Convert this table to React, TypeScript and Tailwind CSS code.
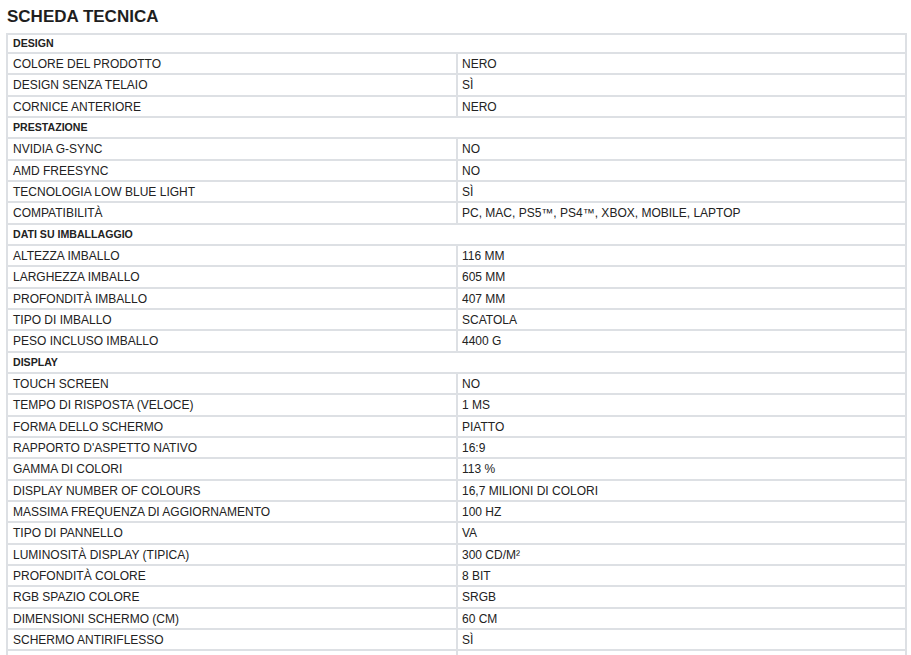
import React from "react";

type Row = { label: string; value?: string };

const rows: Row[] = [
  { label: "DESIGN" },
  { label: "COLORE DEL PRODOTTO", value: "NERO" },
  { label: "DESIGN SENZA TELAIO", value: "SÌ" },
  { label: "CORNICE ANTERIORE", value: "NERO" },
  { label: "PRESTAZIONE" },
  { label: "NVIDIA G-SYNC", value: "NO" },
  { label: "AMD FREESYNC", value: "NO" },
  { label: "TECNOLOGIA LOW BLUE LIGHT", value: "SÌ" },
  { label: "COMPATIBILITÀ", value: "PC, MAC, PS5™, PS4™, XBOX, MOBILE, LAPTOP" },
  { label: "DATI SU IMBALLAGGIO" },
  { label: "ALTEZZA IMBALLO", value: "116 MM" },
  { label: "LARGHEZZA IMBALLO", value: "605 MM" },
  { label: "PROFONDITÀ IMBALLO", value: "407 MM" },
  { label: "TIPO DI IMBALLO", value: "SCATOLA" },
  { label: "PESO INCLUSO IMBALLO", value: "4400 G" },
  { label: "DISPLAY" },
  { label: "TOUCH SCREEN", value: "NO" },
  { label: "TEMPO DI RISPOSTA (VELOCE)", value: "1 MS" },
  { label: "FORMA DELLO SCHERMO", value: "PIATTO" },
  { label: "RAPPORTO D'ASPETTO NATIVO", value: "16:9" },
  { label: "GAMMA DI COLORI", value: "113 %" },
  { label: "DISPLAY NUMBER OF COLOURS", value: "16,7 MILIONI DI COLORI" },
  { label: "MASSIMA FREQUENZA DI AGGIORNAMENTO", value: "100 HZ" },
  { label: "TIPO DI PANNELLO", value: "VA" },
  { label: "LUMINOSITÀ DISPLAY (TIPICA)", value: "300 CD/M²" },
  { label: "PROFONDITÀ COLORE", value: "8 BIT" },
  { label: "RGB SPAZIO COLORE", value: "SRGB" },
  { label: "DIMENSIONI SCHERMO (CM)", value: "60 CM" },
  { label: "SCHERMO ANTIRIFLESSO", value: "SÌ" },
  { label: "", value: "" },
];

const App: React.FC = () => {
  return (
    <div className="min-h-screen bg-white px-[6px] pt-[7px] text-[#222] font-['Liberation_Sans',Arial,sans-serif]">
      <h1 className="pl-[1px] text-[17px] font-bold leading-[20px] text-[#1e1e1e]">
        SCHEDA TECNICA
      </h1>
      <div className="mt-[6px] w-[901px] border-2 border-[#dde0e4]">
        {rows.map((row, i) => (
          <div
            key={i}
            className={`flex ${i > 0 ? "h-[21.33px] border-t-2 border-[#dde0e4] pt-[1px]" : "h-[17px]"}`}
          >
            {row.value === undefined ? (
              <div className="flex flex-1 items-center pl-[5px] text-[10.6px] font-bold">
                {row.label}
              </div>
            ) : (
              <>
                <div className="flex w-[448px] items-center pl-[5px] text-[12px]">
                  {row.label}
                </div>
                <div className="-mt-[1px] flex flex-1 items-center border-l-2 border-[#dde0e4] pl-[4px] pt-[1px] text-[12px]">
                  {row.value}
                </div>
              </>
            )}
          </div>
        ))}
      </div>
    </div>
  );
};

export default App;
